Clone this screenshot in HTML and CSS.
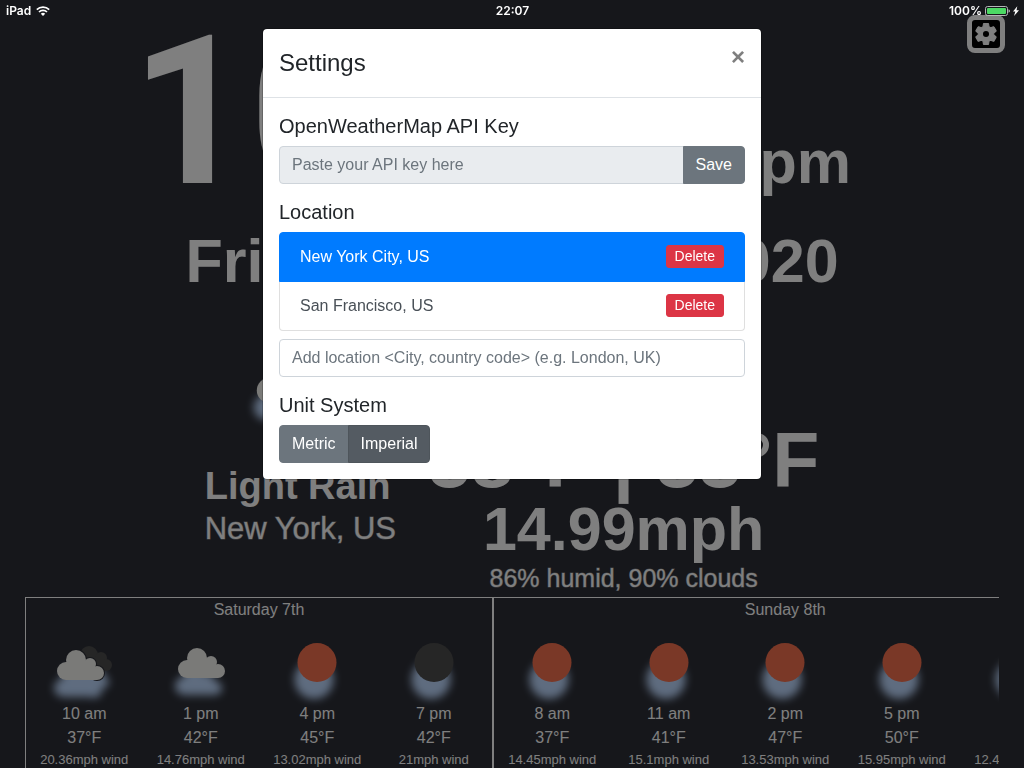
FILE: index.html
```html
<!DOCTYPE html>
<html lang="en">
<head>
<meta charset="utf-8">
<meta name="viewport" content="width=device-width, initial-scale=1">
<title>Weather Clock</title>
<link rel="stylesheet" href="styles.css">
</head>
<body>
<svg class="sprite" aria-hidden="true">
  <symbol id="cloud" viewBox="0 0 60 60">
    <circle cx="16" cy="36" r="9"/><circle cx="26" cy="25" r="10"/><circle cx="40" cy="29" r="6"/><circle cx="47" cy="38" r="7"/>
    <path d="M16 27h20l11 9v9H16z"/>
  </symbol>
  <symbol id="clouds" viewBox="0 0 60 60">
    <g fill="#4c4c4c"><circle cx="35" cy="22" r="9"/><circle cx="47" cy="25" r="6"/><circle cx="52" cy="32" r="6"/><path d="M32 25h18v12H36z"/></g>
    <g fill="#2c2e36"><circle cx="22" cy="27" r="11"/><circle cx="36" cy="31" r="7"/><circle cx="43" cy="40" r="8"/></g>
    <circle cx="12" cy="38" r="9"/><circle cx="22" cy="27" r="10"/><circle cx="36" cy="31" r="6"/><circle cx="43" cy="40" r="7"/>
    <path d="M12 29h20l11 9v9H12z"/>
  </symbol>
  <symbol id="disc" viewBox="0 0 60 60"><circle cx="30" cy="29.500" r="19.500"/></symbol>
</svg>

<main class="scene">
  <div class="clock"><span class="clock-time">10:07</span><span class="clock-half">pm</span></div>
  <div class="date">Friday, March 6th 2020</div>
  <section class="current">
    <div class="summary">
      <svg class="icon icon-large" viewBox="0 0 60 60"><use href="#cloud"/></svg>
      <div class="condition">Light Rain</div>
      <div class="place">New York, US</div>
    </div>
    <div class="readings">
      <div class="temps">38°F | 33°F</div>
      <div class="wind">14.99mph</div>
      <div class="humidity">86% humid, 90% clouds</div>
    </div>
  </section>
  <section class="forecast">
    <div class="day">
      <div class="day-name">Saturday 7th</div>
      <div class="hours">
        <div class="hour"><svg class="icon"><use href="#clouds"/></svg><span>10 am</span><span>37°F</span><small>20.36mph wind</small></div>
        <div class="hour"><svg class="icon"><use href="#cloud"/></svg><span>1 pm</span><span>42°F</span><small>14.76mph wind</small></div>
        <div class="hour"><svg class="icon sun"><use href="#disc"/></svg><span>4 pm</span><span>45°F</span><small>13.02mph wind</small></div>
        <div class="hour"><svg class="icon night"><use href="#disc"/></svg><span>7 pm</span><span>42°F</span><small>21mph wind</small></div>
      </div>
    </div>
    <div class="day">
      <div class="day-name">Sunday 8th</div>
      <div class="hours">
        <div class="hour"><svg class="icon sun"><use href="#disc"/></svg><span>8 am</span><span>37°F</span><small>14.45mph wind</small></div>
        <div class="hour"><svg class="icon sun"><use href="#disc"/></svg><span>11 am</span><span>41°F</span><small>15.1mph wind</small></div>
        <div class="hour"><svg class="icon sun"><use href="#disc"/></svg><span>2 pm</span><span>47°F</span><small>13.53mph wind</small></div>
        <div class="hour"><svg class="icon sun"><use href="#disc"/></svg><span>5 pm</span><span>50°F</span><small>15.95mph wind</small></div>
        <div class="hour"><svg class="icon night"><use href="#disc"/></svg><span>8 pm</span><span>46°F</span><small>12.44mph wind</small></div>
      </div>
    </div>
  </section>
  <button class="settings-button" type="button" aria-label="Settings">
    <svg viewBox="0 0 24 24"><path d="M19.14 12.94c.04-.3.06-.61.06-.94 0-.32-.02-.64-.07-.94l2.03-1.58c.18-.14.23-.41.12-.61l-1.92-3.32c-.12-.22-.37-.29-.59-.22l-2.39.96c-.5-.38-1.03-.7-1.62-.94l-.36-2.54c-.04-.24-.24-.41-.48-.41h-3.84c-.24 0-.43.17-.47.41l-.36 2.54c-.59.24-1.13.57-1.62.94l-2.39-.96c-.22-.08-.47 0-.59.22L2.74 8.87c-.12.21-.08.47.12.61l2.03 1.58c-.05.3-.09.63-.09.94s.02.64.07.94l-2.03 1.58c-.18.14-.23.41-.12.61l1.92 3.32c.12.22.37.29.59.22l2.39-.96c.5.38 1.03.7 1.62.94l.36 2.54c.05.24.24.41.48.41h3.84c.24 0 .44-.17.47-.41l.36-2.54c.59-.24 1.13-.56 1.62-.94l2.39.96c.22.08.47 0 .59-.22l1.92-3.32c.12-.22.07-.47-.12-.61l-2.01-1.58z" stroke="#fff"/><circle cx="12" cy="12" r="2.800" fill="#000"/></svg>
  </button>
</main>

<div class="backdrop">
  <div class="modal" role="dialog" aria-labelledby="modal-title">
    <header class="modal-header">
      <h4 class="modal-title" id="modal-title">Settings</h4>
      <button class="close" type="button" aria-label="Close">×</button>
    </header>
    <div class="modal-body">
      <section>
        <h5><label for="api-key">OpenWeatherMap API Key</label></h5>
        <div class="input-group">
          <input class="field" id="api-key" type="text" placeholder="Paste your API key here" disabled>
          <button class="button" type="button">Save</button>
        </div>
      </section>
      <section>
        <h5><label for="location">Location</label></h5>
        <ul class="locations">
          <li class="location active"><span>New York City, US</span><button class="delete" type="button">Delete</button></li>
          <li class="location"><span>San Francisco, US</span><button class="delete" type="button">Delete</button></li>
        </ul>
        <input class="field" id="location" type="text" placeholder="Add location &lt;City, country code&gt; (e.g. London, UK)">
      </section>
      <section>
        <h5>Unit System</h5>
        <div class="button-group">
          <button class="button" type="button" aria-pressed="false">Metric</button>
          <button class="button" type="button" aria-pressed="true">Imperial</button>
        </div>
      </section>
    </div>
  </div>
</div>

<div class="status-bar">
  <div class="status-side">
    <span>iPad</span>
    <svg class="wifi" viewBox="0 0 14 10" fill="none" stroke="#fff" stroke-width="1.7"><path d="M.8 3.600a9 9 0 0 1 12.400 0M3 6a5.700 5.700 0 0 1 8 0"/><path d="M7 10 4.800 7.700a3.200 3.200 0 0 1 4.400 0z" fill="#fff" stroke="none"/></svg>
  </div>
  <span>22:07</span>
  <div class="status-side status-right">
    <span>100%</span>
    <svg class="battery" viewBox="0 0 34 10"><rect x=".5" y=".5" width="22" height="9" rx="2" fill="none" stroke="#b5b6b8"/><rect x="2" y="2" width="19" height="6" rx="1" fill="#4cd964"/><path d="M23.500 3.200q1.500.5 1.500 1.800t-1.500 1.800z" fill="#b5b6b8"/><path d="M32.300.2 28 5.600h2.300L29 9.900 34 4.300h-2.500z" fill="#fff"/></svg>
  </div>
</div>
</body>
</html>
```
FILE: styles.css
```css
* { box-sizing: border-box; }

body {
  margin: 0;
  background: #2c2e36;
  font-family: "Liberation Sans", Arial, sans-serif;
  font-size: 16px;
  line-height: 24px;
  color: #212529;
}

button, input { font: inherit; }
h4, h5, ul { margin: 0; padding: 0; font-weight: 400; }
.sprite { position: absolute; width: 0; height: 0; }

/* Status bar */
.status-bar {
  position: fixed;
  inset: 0 0 auto;
  display: flex;
  align-items: center;
  height: 21px;
  padding: 0 5px 0 6px;
  color: #fff;
  font: 600 12px/16px Inter, sans-serif;
}
.status-side { display: flex; flex: 1; align-items: center; gap: 5px; }
.status-right { justify-content: flex-end; gap: 3px; }
.wifi { width: 14px; height: 10px; }
.battery { width: 34px; height: 10px; }

/* Weather scene */
.scene {
  height: 100vh;
  padding-top: 10px;
  overflow: hidden;
  color: #fff;
  white-space: nowrap;
}
.clock {
  display: flex;
  justify-content: center;
  align-items: baseline;
  gap: 95px;
  height: 205px;
  padding-right: 42px;
  font-weight: 700;
}
.clock-time { font-family: Roboto, sans-serif; font-size: 207px; line-height: 205px; }
.clock-half, .date, .wind { font-size: 61px; line-height: 61px; font-weight: 700; }
.date { margin-top: 16px; text-align: center; }

.current {
  display: flex;
  justify-content: center;
  align-items: flex-end;
  gap: 32px;
  margin-top: 82px;
}
.summary { padding-bottom: 53px; }
.condition { font-size: 38px; line-height: 37px; font-weight: 700; margin-bottom: 8px; }
.place { font-size: 31px; line-height: 31px; -webkit-text-stroke: 1px rgba(255, 255, 255, .4); }
.readings { text-align: center; }
.temps { font-size: 77px; line-height: 77px; font-weight: 700; }
.humidity { font-size: 25px; line-height: 37px; -webkit-text-stroke: 1px rgba(255, 255, 255, .4); }

.icon {
  display: block;
  width: 60px;
  height: 60px;
  overflow: visible;
  fill: #f4f4f0;
  filter: drop-shadow(-3px 17px 4px #bed9ff);
}
.icon-large { width: 84px; height: 84px; margin: -34px 0 44px 42px; }
.sun { fill: #f4704e; }
.night { fill: #4c4c4c; }

.forecast {
  display: flex;
  margin: 0 25px;
  overflow: hidden;
  border-left: 1px solid #fff;
}
.day { flex: none; border-top: 1px solid #fff; }
.day + .day { border-left: 2px solid #fff; }
.day-name { text-align: center; }
.hours { display: flex; }
.hour {
  display: flex;
  flex-direction: column;
  align-items: center;
  width: calc((100vw - 92px) / 8);
  min-width: 116px;
  padding-top: 11px;
}
.hour .icon { margin-bottom: 9px; }
.hour small { font-size: 13px; line-height: 20px; }

.settings-button {
  position: absolute;
  top: 15px;
  right: 19px;
  display: grid;
  place-items: center;
  width: 38px;
  height: 38px;
  padding: 0;
  border: 5px solid #fff;
  border-radius: 8px;
  background: #000;
}
.settings-button svg { width: 26px; height: 26px; fill: #fff; }

/* Settings dialog */
.backdrop {
  position: fixed;
  inset: 0;
  padding: 28px 8px;
  background: rgba(0, 0, 0, .5);
}
.modal {
  max-width: 500px;
  margin: 0 auto;
  border: 1px solid rgba(0, 0, 0, .2);
  border-radius: 5px;
  background: #fff;
  background-clip: padding-box;
}
.modal-header {
  display: flex;
  justify-content: space-between;
  align-items: flex-start;
  padding: 16px;
  border-bottom: 1px solid #dee2e6;
}
.modal-title { font-size: 24px; line-height: 36px; }
.close {
  padding: 0;
  border: 0;
  background: none;
  color: #7f7f7f;
  font-size: 24px;
  line-height: 24px;
  font-weight: 700;
}
.modal-body { display: grid; gap: 16px; padding: 16px; }
h5 { margin-bottom: 8px; font-size: 20px; line-height: 24px; }

.field {
  display: block;
  width: 100%;
  height: 38px;
  padding: 6px 12px;
  border: 1px solid #ced4da;
  border-radius: 4px;
  background: #fff;
  color: #495057;
}
.field::placeholder { color: #6c757d; opacity: 1; }
.field:disabled { background: #e9ecef; }

.button {
  height: 38px;
  padding: 6px 12px;
  border: 1px solid #6c757d;
  border-radius: 4px;
  background: #6c757d;
  color: #fff;
}
.button[aria-pressed="true"] { background: #545b62; border-color: #4e555b; }
.input-group, .button-group { display: flex; }
.input-group .field, .button-group .button:first-child { border-top-right-radius: 0; border-bottom-right-radius: 0; }
.input-group .button, .button-group .button:last-child { margin-left: -1px; border-top-left-radius: 0; border-bottom-left-radius: 0; }

.locations { margin-bottom: 8px; list-style: none; }
.location {
  display: flex;
  justify-content: space-between;
  align-items: flex-start;
  padding: 12px 20px;
  border: 1px solid #dfdfdf;
  color: #495057;
}
.location:last-child { border-top: 0; border-radius: 0 0 4px 4px; }
.location.active { border-color: #007bff; border-radius: 4px 4px 0 0; background: #007bff; color: #fff; }
.delete {
  height: 23px;
  padding: 0 8px;
  border: 1px solid #dc3545;
  border-radius: 3px;
  background: #dc3545;
  color: #fff;
  font-size: 14px;
  line-height: 21px;
}
```
